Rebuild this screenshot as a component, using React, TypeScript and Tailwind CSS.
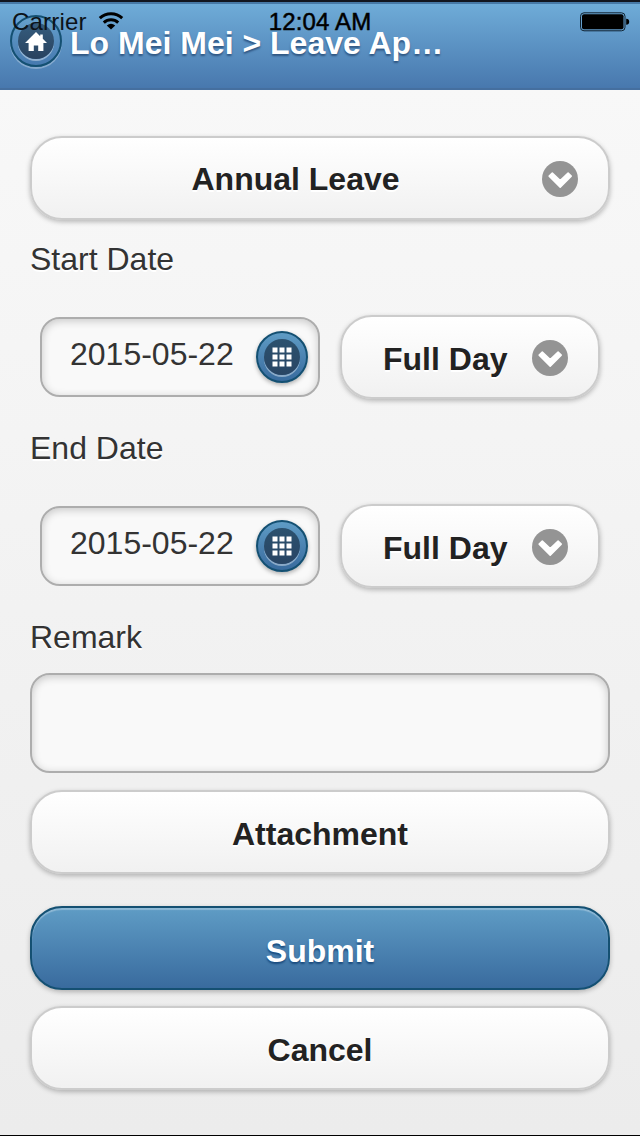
import type { ReactNode } from "react";

const pill =
  "flex items-center rounded-[32px] border-2 border-[#cccccc] bg-linear-to-b from-white to-[#f1f1f1] pt-[3px] font-bold text-[#222222] shadow-[0_2px_5px_rgba(0,0,0,0.26)] [text-shadow:0_2px_0_#ffffff]";

function Chevron() {
  return (
    <svg className="mb-px h-9 w-9 shrink-0" viewBox="0 0 36 36">
      <circle cx="18" cy="18" r="18" fill="#949494" />
      <path
        d="M7.2 15.1 L10.3 12 L18.2 19.6 L26.1 12 L29.2 15.1 L18.2 26.2 Z"
        fill="#fff"
        stroke="#fff"
        strokeWidth="1.6"
        strokeLinejoin="round"
      />
    </svg>
  );
}

function RoundButton({ label, children }: { label: string; children: ReactNode }) {
  return (
    <button
      aria-label={label}
      className="flex h-[52px] w-[52px] shrink-0 items-center justify-center rounded-full border-2 border-[#145072] bg-linear-to-b from-[#5f9cc5] to-[#396b9e] shadow-[0_2px_4px_rgba(0,0,0,0.3)]"
    >
      <span className="flex h-9 w-9 items-center justify-center rounded-full bg-linear-to-b from-[#2b516e] to-[#294564] shadow-[0_2px_0_rgba(255,255,255,0.4)]">
        {children}
      </span>
    </button>
  );
}

function HomeButton() {
  return (
    <button
      aria-label="Home"
      className="flex h-[52px] w-[52px] shrink-0 items-center justify-center rounded-full border-2 border-[#145072] bg-linear-to-b from-[#66a1cd] to-[#4679af] shadow-[0_2px_0_rgba(255,255,255,0.3)]"
    >
      <span className="flex h-9 w-9 items-center justify-center rounded-full bg-linear-to-b from-[#355d7e] to-[#29425f] shadow-[0_2px_0_rgba(255,255,255,0.4)]">
        <svg className="h-[19px] w-[22px]" viewBox="0 0 22 19" fill="#fff">
          <path d="M11 0 L15.2 4.2 V2.4 H17.8 V6.8 L22 11 H18.4 V19 H13.2 V13.4 H8.8 V19 H3.6 V11 H0 Z" />
        </svg>
      </span>
    </button>
  );
}

function DateRow({ label, date }: { label: string; date: string }) {
  return (
    <div className="flex gap-5 px-2.5">
      <div className="mt-[2px] flex h-20 w-[280px] items-center rounded-[20px] border-2 border-[#adadad] bg-[#f9f9f9] pl-7 pr-2.5 shadow-[inset_0_2px_8px_rgba(0,0,0,0.2)]">
        <span className="flex-1 pb-[6px] text-[#333333]">{date}</span>
        <RoundButton label={label}>
          <svg className="h-5 w-5" viewBox="0 0 20 20" fill="#fff">
            {[0.5, 7.5, 14.5].map((y) =>
              [0.5, 7.5, 14.5].map((x) => <rect key={`${x}-${y}`} x={x} y={y} width="5" height="5" />),
            )}
          </svg>
        </RoundButton>
      </div>
      <button className={`${pill} h-[84px] w-[260px] pl-[41px] pr-[30px]`}>
        <span className="flex-1 text-left">Full Day</span>
        <Chevron />
      </button>
    </div>
  );
}

function Label({ children }: { children: ReactNode }) {
  return <div className="h-10 text-[#333333] [text-shadow:0_2px_0_#ffffff]">{children}</div>;
}

function StatusBar() {
  return (
    <div className="absolute inset-x-0 top-[2px] grid h-10 grid-cols-3 items-center text-2xl leading-10 text-black">
      <div className="flex items-center gap-[11px] pl-[12px]">
        <span className="tracking-[0.2px] text-[#0c1319]">Carrier</span>
        <svg className="mb-[2px] h-[18px] w-[26px]" viewBox="0 0 26 18">
          <path d="M1.8 6.1 C8 0.2 18 0.2 24.2 6.1" fill="none" stroke="#000" strokeWidth="3" />
          <path d="M5.8 10.6 C10 6.8 16 6.8 20.2 10.6" fill="none" stroke="#000" strokeWidth="3" />
          <path d="M8.8 13.4 Q13 10.2 17.2 13.4 L13 17.6 Z" />
        </svg>
      </div>
      <span className="text-center tracking-[0.15px] [-webkit-text-stroke:0.5px_#000]">12:04 AM</span>
      <svg className="mr-[10px] h-5 w-[50px] justify-self-end" viewBox="0 0 50 20">
        <rect x="0.5" y="0.8" width="44.5" height="18" rx="3.5" fill="none" stroke="#102332" strokeWidth="1" />
        <rect x="2" y="2.3" width="41.5" height="15" rx="2" />
        <path d="M46.2 6.8 Q49.2 7 49.2 9.8 Q49.2 12.6 46.2 12.8 Z" />
      </svg>
    </div>
  );
}

export default function App() {
  return (
    <div className="relative flex h-[1136px] w-[640px] flex-col overflow-hidden border-b border-black bg-linear-to-b from-[#f9f9f9] to-[#ececec] font-['Liberation_Sans',Arial,sans-serif] text-[32px] leading-10">
      <header className="h-[90px] shrink-0 border-t-2 border-[#12161f]">
        <div className="flex h-[88px] items-start border-y-2 border-t-[#4779a6] border-b-[#456f9f] bg-linear-to-b from-[#6facd8] to-[#4878ae] pl-2.5">
          <div className="mt-[11px]">
            <HomeButton />
          </div>
          <h1 className="ml-[8px] mt-[19px] font-bold text-white [text-shadow:0_2px_2px_#2f5682]">Lo Mei Mei &gt; Leave Ap…</h1>
        </div>
      </header>
      <StatusBar />
      <main className="flex flex-col px-[30px] pt-[46px]">
        <button className={`${pill} h-[84px] pl-[61px] pr-[30px]`}>
          <span className="flex-1 pr-[44px] pb-px">Annual Leave</span>
          <Chevron />
        </button>
        <div className="mt-[19px]">
          <Label>Start Date</Label>
        </div>
        <div className="mt-[36px]">
          <DateRow label="Choose start date" date="2015-05-22" />
        </div>
        <div className="mt-[29px]">
          <Label>End Date</Label>
        </div>
        <div className="mt-[36px]">
          <DateRow label="Choose end date" date="2015-05-22" />
        </div>
        <div className="mt-[29px]">
          <Label>Remark</Label>
        </div>
        <textarea
          aria-label="Remark"
          className="mt-4 h-[100px] resize-none rounded-[20px] border-2 border-[#adadad] bg-[#f9f9f9] px-4 py-2 shadow-[inset_0_2px_8px_rgba(0,0,0,0.2)] outline-none"
        />
        <button className={`${pill} mt-[17px] h-[84px] justify-center`}>Attachment</button>
        <button className="mt-8 flex h-[84px] items-center justify-center rounded-[32px] border-2 border-[#145072] bg-linear-to-b from-[#5f9cc5] to-[#396b9e] pt-[5px] font-bold text-white shadow-[inset_0_2px_1px_rgba(255,255,255,0.3),0_2px_5px_rgba(0,0,0,0.26)] [text-shadow:0_2px_2px_#194b7e]">
          Submit
        </button>
        <button className={`${pill} mt-4 h-[84px] justify-center`}>
          <span className="pt-px">Cancel</span>
        </button>
      </main>
    </div>
  );
}
